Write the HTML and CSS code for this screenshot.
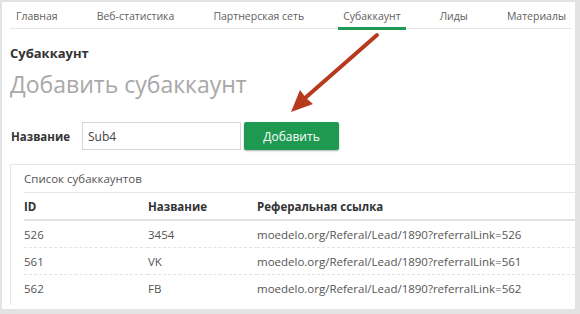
FILE: index.html
```html
<!DOCTYPE html>
<html lang="ru">
<head>
    <meta charset="UTF-8">
    <title>Субаккаунт</title>
    <link rel="stylesheet" href="styles.css">
</head>
<body>
    <div class="frame">
        <nav class="tabs">
            <a class="tab">Главная</a>
            <a class="tab">Веб-статистика</a>
            <a class="tab">Партнерская сеть</a>
            <a class="tab active">Субаккаунт</a>
            <a class="tab">Лиды</a>
            <a class="tab">Материалы</a>
        </nav>

        <h2 class="section-title">Субаккаунт</h2>
        <h1 class="page-title">Добавить субаккаунт</h1>

        <form class="add-form">
            <label class="add-label" for="name">Название</label>
            <input class="add-input" id="name" type="text" value="Sub4">
            <button class="add-button" type="button">Добавить</button>
        </form>

        <div class="panel">
            <div class="panel-caption">Список субаккаунтов</div>
            <table class="subs">
                <thead>
                    <tr>
                        <th class="col-id">ID</th>
                        <th class="col-name">Название</th>
                        <th>Реферальная ссылка</th>
                    </tr>
                </thead>
                <tbody>
                    <tr>
                        <td>526</td>
                        <td>3454</td>
                        <td>moedelo.org/Referal/Lead/1890?referralLink=526</td>
                    </tr>
                    <tr>
                        <td>561</td>
                        <td>VK</td>
                        <td>moedelo.org/Referal/Lead/1890?referralLink=561</td>
                    </tr>
                    <tr>
                        <td>562</td>
                        <td>FB</td>
                        <td>moedelo.org/Referal/Lead/1890?referralLink=562</td>
                    </tr>
                </tbody>
            </table>
        </div>

        <!-- annotation arrow over the page -->
        <svg class="arrow" width="580" height="314" viewBox="0 0 580 314">
            <path d="M377 35 L304 99" stroke="#b63a1d" stroke-width="4" stroke-linecap="round" fill="none"/>
            <polygon points="291,112 300,90 306,98 313,104" fill="#b63a1d"/>
        </svg>
    </div>
</body>
</html>
```

FILE: styles.css
```css
body {
    margin: 0;
    background-color: #e3e3e3;
    font-family: "Open Sans", "Noto Sans", sans-serif;
    color: #555;
}

.frame {
    margin: 2px 5px 5px 2px;
    width: 565px;
    height: 307px;
    padding: 0 0 0 8px;
    background-color: #fff;
    overflow: hidden;
}

.tabs {
    display: flex;
    justify-content: space-between;
    padding: 0 6px;
    margin-right: 3px;
    border-bottom: 1px solid #e6e6e6;
    height: 26px;
}

.tab {
    font-size: 10.5px;
    line-height: 15px;
    padding-top: 7px;
    color: #606060;
    position: relative;
}

.tab.active::after {
    content: "";
    position: absolute;
    left: -5px;
    right: -5px;
    bottom: -2px;
    height: 3px;
    background-color: #1e9a55;
}

.section-title {
    font-size: 13px;
    font-weight: bold;
    color: #333;
    margin: 15px 0 0 0;
    line-height: 18px;
}

.page-title {
    font-size: 23px;
    font-weight: normal;
    color: #a8a8a8;
    margin: 7px 0 0 0;
    line-height: 30px;
}

.add-form {
    display: flex;
    align-items: center;
    margin: 23px 0 0 0;
    height: 28px;
}

.add-label {
    font-size: 11.5px;
    font-weight: bold;
    color: #333;
    width: 71px;
    padding-left: 1px;
}

.add-input {
    box-sizing: border-box;
    width: 159px;
    height: 28px;
    border: 1px solid #d6d6d6;
    padding: 0 5px;
    font-family: "Open Sans", sans-serif;
    font-size: 12px;
    color: #444;
    margin: 0;
}

.add-button {
    margin-left: 3px;
    width: 95px;
    height: 28px;
    border: none;
    border-radius: 2px;
    background-color: #1e9a50;
    color: #fff;
    font-family: "Open Sans", sans-serif;
    font-size: 12px;
    box-shadow: 0 1px 2px rgba(0, 0, 0, 0.3);
}

.panel {
    margin-top: 14px;
    border-top: 1px solid #e6e6e6;
    border-left: 1px solid #e6e6e6;
    padding: 0 0 4px 13px;
}

.panel-caption {
    font-size: 11.5px;
    line-height: 27px;
    color: #555;
    border-bottom: 1px solid #e6e6e6;
}

.subs {
    width: 100%;
    border-collapse: collapse;
    font-size: 11.5px;
}

.subs th,
.subs td {
    text-align: left;
    padding: 0;
    height: 26px;
}

.subs th {
    color: #333;
    font-weight: bold;
    border-bottom: 2px solid #e3e3e3;
}

.subs td {
    color: #555;
    border-bottom: 1px dashed #e3e3e3;
}

.subs tbody tr:last-child td {
    border-bottom: none;
}

.col-id {
    width: 124px;
}

.col-name {
    width: 109px;
}

.arrow {
    position: absolute;
    left: 0;
    top: 0;
    pointer-events: none;
}
```
